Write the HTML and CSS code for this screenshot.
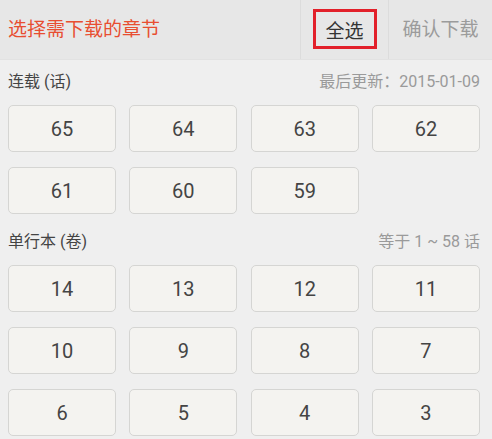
FILE: index.html
```html
<!DOCTYPE html>
<html lang="zh">
<head>
<meta charset="utf-8">
<link rel="stylesheet" href="styles.css">
</head>
<body>
<div class="header">
  <div class="title">选择需下载的章节</div>
  <div class="action select-all"><span class="box">全选</span></div>
  <div class="action confirm">确认下载</div>
</div>
<div class="content">
  <div class="sec-head">
    <span class="label">连载 (话)</span>
    <span class="meta">最后更新：2015-01-09</span>
  </div>
  <div class="grid">
    <div class="btn">65</div><div class="btn">64</div><div class="btn">63</div><div class="btn">62</div>
    <div class="btn">61</div><div class="btn">60</div><div class="btn">59</div>
  </div>
  <div class="sec-head">
    <span class="label">单行本 (卷)</span>
    <span class="meta">等于 1 ~ 58 话</span>
  </div>
  <div class="grid">
    <div class="btn">14</div><div class="btn">13</div><div class="btn">12</div><div class="btn">11</div>
    <div class="btn">10</div><div class="btn">9</div><div class="btn">8</div><div class="btn">7</div>
    <div class="btn">6</div><div class="btn">5</div><div class="btn">4</div><div class="btn">3</div>
  </div>
</div>
</body>
</html>
```
FILE: styles.css
```css
html, body {
  margin: 0;
  padding: 0;
  background: #efefef;
  font-family: Roboto, "Noto Sans CJK SC", sans-serif;
  overflow: hidden;
  height: 439px;
}
.header {
  height: 60px;
  background: #e7e7e7;
  display: flex;
  align-items: stretch;
  border-bottom: 1px solid #e2e2e2;
  box-sizing: border-box;
}
.title {
  flex: 1;
  padding-left: 8px;
  display: flex;
  align-items: center;
  font-size: 19px;
  color: #e84e31;
  padding-bottom: 4px;
}
.action {
  display: flex;
  align-items: center;
  justify-content: center;
  border-left: 1px solid #dcdcdc;
  box-sizing: border-box;
}
.select-all {
  width: 88px;
}
.box {
  width: 64px;
  height: 40px;
  box-sizing: border-box;
  border: 3px solid #e2202a;
  display: flex;
  align-items: center;
  justify-content: center;
  font-size: 19px;
  color: #333;
  margin-top: -1px;
}
.confirm {
  width: 104px;
  font-size: 19px;
  color: #9b9b9b;
  padding-bottom: 4px;
}
.content {
  padding: 0 12px 0 8px;
}
.sec-head {
  display: flex;
  justify-content: space-between;
  align-items: center;
  height: 20px;
  padding: 10px 0 15px;
}
.label {
  font-size: 16px;
  color: #444;
}
.meta {
  font-size: 16px;
  color: #9a9a9a;
}
.grid {
  display: grid;
  grid-template-columns: repeat(4, 108px);
  justify-content: space-between;
  row-gap: 15px;
  margin-bottom: 6px;
}
.btn {
  height: 47px;
  box-sizing: border-box;
  background: #f4f3f0;
  border: 1px solid #d5d5d3;
  border-radius: 5px;
  display: flex;
  align-items: center;
  justify-content: center;
  font-size: 20px;
  color: #444;
}
```
